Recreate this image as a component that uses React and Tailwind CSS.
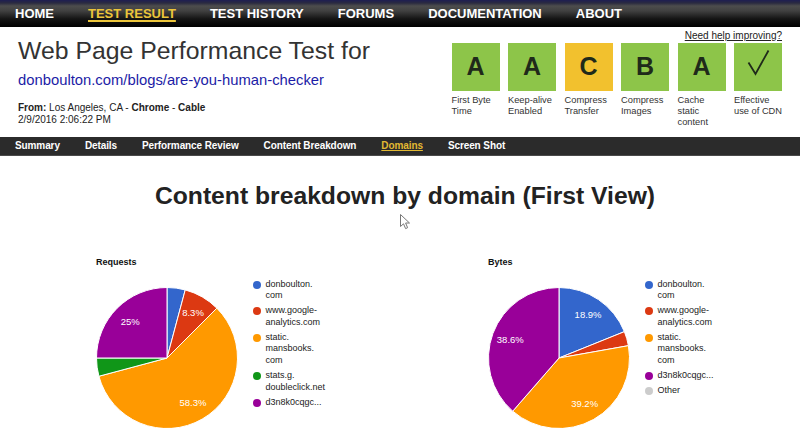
import React from "react";

const F = { fontFamily: '"Liberation Sans", Arial, sans-serif' };

function slicePath(cx, cy, r, a0, a1) {
  const p = (a) => [cx + r * Math.sin(2 * Math.PI * a), cy - r * Math.cos(2 * Math.PI * a)];
  const [x0, y0] = p(a0);
  const [x1, y1] = p(a1);
  const large = a1 - a0 > 0.5 ? 1 : 0;
  return `M${cx},${cy} L${x0},${y0} A${r},${r} 0 ${large} 1 ${x1},${y1} Z`;
}

function Pie({ data }) {
  const cx = 71, cy = 71, r = 70.5;
  let acc = 0;
  const slices = data.map((d) => {
    const a0 = acc;
    acc += d.v;
    return { ...d, a0, a1: acc };
  });
  return (
    <svg width="142" height="142" viewBox="0 0 142 142">
      {slices.map((s, i) => (
        <path key={i} d={slicePath(cx, cy, r, s.a0, s.a1)} fill={s.c} stroke="#fff" strokeWidth="1" strokeLinejoin="round" />
      ))}
      {slices.filter((s) => s.label).map((s, i) => {
        const m = (s.a0 + s.a1) / 2;
        const x = cx + 52 * Math.sin(2 * Math.PI * m);
        const y = cy - 52 * Math.cos(2 * Math.PI * m);
        return (
          <text key={i} x={x} y={y + 3.3} textAnchor="middle" fill="#fff" fontSize="9.5" fontFamily='"Liberation Sans", Arial, sans-serif'>
            {s.label}
          </text>
        );
      })}
    </svg>
  );
}

function Legend({ items }) {
  return (
    <div className="flex flex-col gap-[3px] text-[9px] leading-[11.8px] text-[#222]">
      {items.map((it, i) => (
        <div key={i} className="flex items-start gap-[4.5px]">
          <span className="mt-[2px] w-[8px] h-[8px] rounded-full shrink-0" style={{ background: it.c }} />
          <span>
            {it.lines.map((l, j) => (
              <div key={j}>{l}</div>
            ))}
          </span>
        </div>
      ))}
    </div>
  );
}

const BLUE = "#3366cc", RED = "#dc3912", ORANGE = "#ff9900", GREEN = "#109618", PURPLE = "#990099", GREY = "#cccccc";

function Chart({ title, data, legend }) {
  return (
    <div className="w-[392px] shrink-0">
      <div className="text-[9px] leading-[11px] font-bold text-[#111]">{title}</div>
      <div className="flex items-start mt-[11px] gap-[15.5px]">
        <div className="mt-[8.5px] ml-[-0.5px]">
          <Pie data={data} />
        </div>
        <Legend items={legend} />
      </div>
    </div>
  );
}

const grades = [
  { g: "A", c: "#8dc549", l: ["First Byte", "Time"] },
  { g: "A", c: "#8dc549", l: ["Keep-alive", "Enabled"] },
  { g: "C", c: "#f2c12e", l: ["Compress", "Transfer"] },
  { g: "B", c: "#8dc549", l: ["Compress", "Images"] },
  { g: "A", c: "#8dc549", l: ["Cache", "static", "content"] },
  { g: "check", c: "#8dc549", l: ["Effective", "use of CDN"] },
];

export default function App() {
  const topNav = ["HOME", "TEST RESULT", "TEST HISTORY", "FORUMS", "DOCUMENTATION", "ABOUT"];
  const subNav = ["Summary", "Details", "Performance Review", "Content Breakdown", "Domains", "Screen Shot"];
  return (
    <div className="relative w-[800px] h-[428px] overflow-hidden bg-white" style={F}>
      {/* top nav */}
      <div className="h-[27px] flex items-center pl-[15px] gap-[34px] bg-[linear-gradient(to_bottom,#1e1e52_0px,#2a2a40_3px,#4d4d4d_6px,#404040_11px,#141414_19px,#000_27px)]">
        {topNav.map((t) => (
          <span
            key={t}
            className={
              "text-[13px] font-bold leading-[15px] " +
              (t === "TEST RESULT"
                ? "text-[#ecc53a] underline decoration-[1.5px] underline-offset-[2px]"
                : "text-white")
            }
          >
            {t}
          </span>
        ))}
      </div>

      {/* header */}
      <div className="h-[110px] flex justify-between">
        <div className="pl-[18px]">
          <div className="mt-[10px] text-[24.8px] leading-[28px] text-[#333]">Web Page Performance Test for</div>
          <div className="mt-[6px] text-[14.8px] leading-[18px] text-[#1c1ca6]">donboulton.com/blogs/are-you-human-checker</div>
          <div className="mt-[13px] text-[10px] leading-[12px] text-[#222]">
            <b>From:</b> Los Angeles, CA - <b>Chrome</b> - <b>Cable</b>
          </div>
          <div className="text-[10px] leading-[12px] text-[#222]">2/9/2016 2:06:22 PM</div>
        </div>
        <div className="pr-[18px] flex flex-col items-end">
          <div className="mt-[2.5px] text-[10px] leading-[12px] text-[#222] underline">Need help improving?</div>
          <div className="mt-[1.5px] flex gap-[8.5px]">
            {grades.map((g, i) => (
              <div key={i} className="w-[48px]">
                <div className="w-[48px] h-[48px] flex items-center justify-center text-[25px] font-bold text-[#1f2a1a]" style={{ background: g.c }}>
                  {g.g === "check" ? (
                    <svg width="48" height="48" viewBox="0 0 48 48">
                      <path d="M14.5 19.5 L21.5 31 L34.5 7.5" fill="none" stroke="#1f2a1a" strokeWidth="1.8" />
                    </svg>
                  ) : (
                    g.g
                  )}
                </div>
                <div className="mt-[4px] text-[9.3px] leading-[11px] text-[#333] whitespace-nowrap">
                  {g.l.map((x, j) => (
                    <div key={j}>{x}</div>
                  ))}
                </div>
              </div>
            ))}
          </div>
        </div>
      </div>

      {/* sub nav */}
      <div className="h-[19px] bg-[#2b2b2b] border-b border-[#4a4a4a] flex items-center pl-[15px] gap-[25px]">
        {subNav.map((t) => (
          <span
            key={t}
            className={
              "text-[10px] font-bold leading-[12px] tracking-[-0.1px] " +
              (t === "Domains" ? "text-[#e2b932] underline underline-offset-[1px]" : "text-white")
            }
          >
            {t}
          </span>
        ))}
      </div>

      {/* heading */}
      <div className="mt-[26px] text-center">
        <h1 className="inline-block ml-[10px] text-[24.7px] leading-[28px] font-bold text-[#222]">
          Content breakdown by domain (First View)
        </h1>
      </div>

      {/* charts */}
      <div className="mt-[45.5px] flex pl-[96px]">
        <Chart
          title="Requests"
          data={[
            { v: 1 / 24, c: BLUE },
            { v: 2 / 24, c: RED, label: "8.3%" },
            { v: 14 / 24, c: ORANGE, label: "58.3%" },
            { v: 1 / 24, c: GREEN },
            { v: 6 / 24, c: PURPLE, label: "25%" },
          ]}
          legend={[
            { c: BLUE, lines: ["donboulton.", "com"] },
            { c: RED, lines: ["www.google-", "analytics.com"] },
            { c: ORANGE, lines: ["static.", "mansbooks.", "com"] },
            { c: GREEN, lines: ["stats.g.", "doubleclick.net"] },
            { c: PURPLE, lines: ["d3n8k0cqgc..."] },
          ]}
        />
        <Chart
          title="Bytes"
          data={[
            { v: 0.189, c: BLUE, label: "18.9%" },
            { v: 0.033, c: RED },
            { v: 0.392, c: ORANGE, label: "39.2%" },
            { v: 0.386, c: PURPLE, label: "38.6%" },
          ]}
          legend={[
            { c: BLUE, lines: ["donboulton.", "com"] },
            { c: RED, lines: ["www.google-", "analytics.com"] },
            { c: ORANGE, lines: ["static.", "mansbooks.", "com"] },
            { c: PURPLE, lines: ["d3n8k0cqgc..."] },
            { c: GREY, lines: ["Other"] },
          ]}
        />
      </div>

      {/* mouse cursor */}
      <svg className="absolute left-[400px] top-[214px]" width="12" height="17" viewBox="0 0 12 17">
        <path d="M0.5 0.5 L0.5 12.5 L3.5 9.8 L5.6 14.6 L7.6 13.7 L5.6 9 L9.5 9 Z" fill="#fff" stroke="#777" strokeWidth="1" />
      </svg>
    </div>
  );
}
